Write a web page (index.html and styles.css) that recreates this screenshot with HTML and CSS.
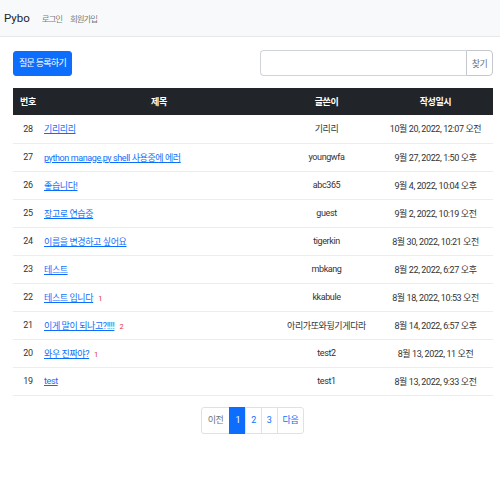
FILE: index.html
```html
<!DOCTYPE html>
<html lang="ko">
<head>
<meta charset="utf-8">
<title>Pybo</title>
<link rel="stylesheet" href="styles.css">
</head>
<body>
<nav class="navbar">
  <a class="brand" href="#">Pybo</a>
  <a class="nav-link" href="#">로그인</a>
  <a class="nav-link" href="#">회원가입</a>
</nav>
<div class="container">
  <div class="toolbar">
    <a class="btn-primary" href="#">질문 등록하기</a>
    <div class="input-group">
      <input class="search" type="text">
      <button class="btn-search">찾기</button>
    </div>
  </div>
  <table class="table">
    <colgroup>
      <col class="w-num"><col class="w-subj"><col class="w-author"><col class="w-date">
    </colgroup>
    <thead>
      <tr>
        <th>번호</th>
        <th>제목</th>
        <th>글쓴이</th>
        <th>작성일시</th>
      </tr>
    </thead>
    <tbody>
      <tr><td>28</td><td class="subj"><a href="#">기리리리</a></td><td>기리리</td><td>10월 20, 2022, 12:07 오전</td></tr>
      <tr><td>27</td><td class="subj"><a href="#">python manage.py shell 사용중에 에러</a></td><td>youngwfa</td><td>9월 27, 2022, 1:50 오후</td></tr>
      <tr><td>26</td><td class="subj"><a href="#">좋습니다!</a></td><td>abc365</td><td>9월 4, 2022, 10:04 오후</td></tr>
      <tr><td>25</td><td class="subj"><a href="#">장고로 연습중</a></td><td>guest</td><td>9월 2, 2022, 10:19 오전</td></tr>
      <tr><td>24</td><td class="subj"><a href="#">이름을 변경하고 싶어요</a></td><td>tigerkin</td><td>8월 30, 2022, 10:21 오전</td></tr>
      <tr><td>23</td><td class="subj"><a href="#">테스트</a></td><td>mbkang</td><td>8월 22, 2022, 6:27 오후</td></tr>
      <tr><td>22</td><td class="subj"><a href="#">테스트 입니다</a><span class="count">1</span></td><td>kkabule</td><td>8월 18, 2022, 10:53 오전</td></tr>
      <tr><td>21</td><td class="subj"><a href="#">이게 말이 되나고?!!!!</a><span class="count">2</span></td><td>아리가또와뒹기게다라</td><td>8월 14, 2022, 6:57 오후</td></tr>
      <tr><td>20</td><td class="subj"><a href="#">와우 진짜야?</a><span class="count">1</span></td><td>test2</td><td>8월 13, 2022, 11 오전</td></tr>
      <tr><td>19</td><td class="subj"><a href="#">test</a></td><td>test1</td><td>8월 13, 2022, 9:33 오전</td></tr>
    </tbody>
  </table>
  <ul class="pagination">
    <li class="page disabled">이전</li>
    <li class="page active">1</li>
    <li class="page">2</li>
    <li class="page">3</li>
    <li class="page">다음</li>
  </ul>
</div>
</body>
</html>
```
FILE: styles.css
```css
* { box-sizing: border-box; }
html, body { margin: 0; padding: 0; }
body {
  font-family: Roboto, "Noto Sans CJK KR", sans-serif;
  font-size: 9px;
  letter-spacing: -0.4px;
  color: #212529;
  background: #fff;
}
a { text-decoration: none; }

.navbar {
  height: 37px;
  background: #f8f9fa;
  border-bottom: 1px solid #e6e8ea;
  display: flex;
  align-items: center;
  padding: 0 4px;
}
.brand {
  color: #212529;
  font-size: 11.5px;
  letter-spacing: 0;
  margin-right: 12px;
}
.nav-link {
  color: rgba(0,0,0,0.55);
  font-size: 8.5px;
  letter-spacing: -1.1px;
  margin-right: 8px;
}

.container { padding: 0 7px 0 13px; }

.toolbar {
  display: flex;
  justify-content: space-between;
  align-items: center;
  margin-top: 13px;
  margin-bottom: 12px;
}
.btn-primary {
  display: inline-block;
  background: #0d6efd;
  color: #fff;
  border: 1px solid #0d6efd;
  border-radius: 3px;
  padding: 0 5px;
  height: 25px;
  line-height: 23px;
  font-size: 9px;
  letter-spacing: -0.7px;
}
.input-group {
  display: flex;
  width: 233px;
  height: 26px;
}
.search {
  flex: 1;
  min-width: 0;
  border: 1px solid #ced4da;
  border-right: none;
  border-radius: 4px 0 0 4px;
  padding: 0 6px;
}
.btn-search {
  width: 27px;
  border: 1px solid #c4c8cc;
  border-radius: 0 4px 4px 0;
  background: #fff;
  color: #6c757d;
  font-family: inherit;
  font-size: 9px;
  letter-spacing: -0.6px;
  padding: 0;
}

.table {
  width: 480px;
  table-layout: fixed;
  border-collapse: collapse;
}
.w-num { width: 30px; }
.w-subj { width: 232px; }
.w-author { width: 103px; }
.w-date { width: 115px; }
.table th {
  background: #212529;
  color: #fff;
  font-weight: 700;
  height: 27px;
  padding: 0;
  text-align: center;
  white-space: nowrap;
}
.table td {
  height: 28px;
  padding: 0;
  text-align: center;
  white-space: nowrap;
  border-bottom: 1px solid #ebedef;
  color: #333;
}
.table td.subj { text-align: left; padding-left: 1px; }
.table td a {
  color: #0d6efd;
  text-decoration: underline;
}
.count {
  color: #dc3545;
  font-size: 7.5px;
  margin-left: 5px;
}

.pagination {
  list-style: none;
  display: flex;
  justify-content: center;
  margin: 11px 0 0 0;
  padding: 0;
}
.page {
  height: 27px;
  line-height: 25px;
  padding: 0 5px;
  border: 1px solid #dee2e6;
  margin-left: -1px;
  color: #0d6efd;
  background: #fff;
}
.page:first-child { border-radius: 3px 0 0 3px; padding: 0 6px; }
.page:last-child { border-radius: 0 3px 3px 0; }
.page.disabled { color: #6c757d; }
.page.active { background: #0d6efd; border-color: #0d6efd; color: #fff; }
```
